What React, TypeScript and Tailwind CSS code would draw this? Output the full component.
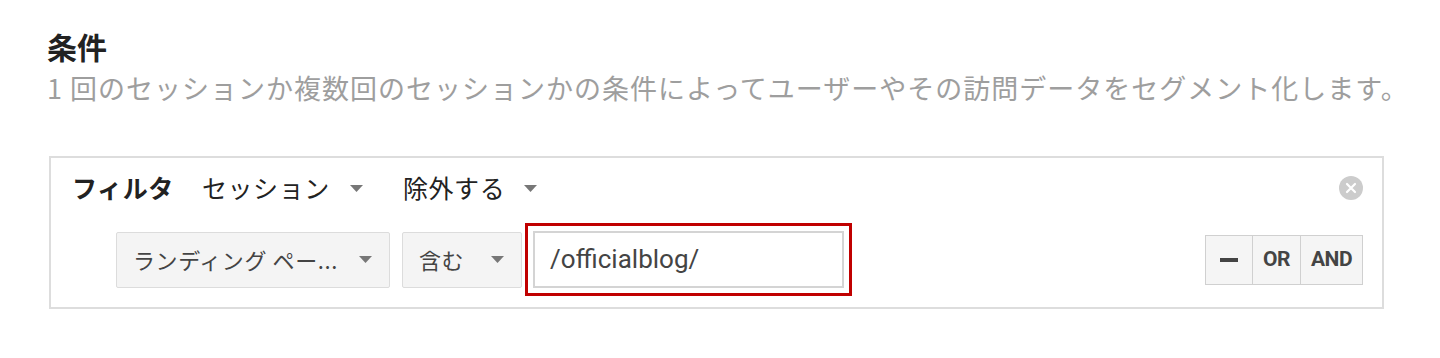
import React from 'react';

const jp = "font-['Noto_Sans_CJK_JP','Noto_Sans',sans-serif]";

function Caret({ className = '' }: { className?: string }) {
    return (
        <svg width="13" height="7" viewBox="0 0 13 7" className={className}>
            <path d="M0 0 L13 0 L6.5 7 Z" fill="#777777" />
        </svg>
    );
}

function SelectBox({ label, width }: { label: string; width: string }) {
    return (
        <div
            className={`flex items-center justify-between ${width} h-[56px] pl-[16px] pr-[17px] bg-[#f4f4f4] border border-[#dcdcdc] rounded-[2px] text-[22px] tracking-[0.6px] text-[#444444] ${jp}`}
        >
            <span className="whitespace-nowrap">{label}</span>
            <Caret />
        </div>
    );
}

export default function App() {
    return (
        <div className="w-[1440px] h-[358px] bg-white pl-[47px] pt-[27px] overflow-hidden">
            <h2 className={`text-[30px] leading-[38px] font-bold text-[#222222] ${jp}`}>条件</h2>
            <p className={`mt-[5px] text-[27px] leading-[36px] tracking-[1px] text-[#9e9e9e] whitespace-nowrap ${jp}`}>
                1 回のセッションか複数回のセッションかの条件によってユーザーやその訪問データをセグメント化します。
            </p>

            <div className="mt-[50px] ml-[2px] w-[1335px] border-2 border-[#dddddd] pt-[12px] pb-[11px] pl-[21px] pr-[19px]">
                <div className={`flex items-center h-[36px] text-[25px] tracking-[0.6px] text-[#222222] ${jp}`}>
                    <span className="font-bold">フィルタ</span>
                    <span className="ml-[28px]">セッション</span>
                    <Caret className="ml-[20px]" />
                    <span className="ml-[40px]">除外する</span>
                    <Caret className="ml-[19px]" />
                    <div className="ml-auto w-[24px] h-[24px] rounded-full bg-[#cccccc] flex items-center justify-center">
                        <svg width="12" height="12" viewBox="0 0 12 12">
                            <path d="M2 2 L10 10 M10 2 L2 10" stroke="#ffffff" strokeWidth="2.2" strokeLinecap="round" />
                        </svg>
                    </div>
                </div>

                <div className="flex items-center mt-[17px] pl-[44px]">
                    <SelectBox label="ランディング ペー..." width="w-[274px]" />
                    <div className="ml-[12px]">
                        <SelectBox label="含む" width="w-[120px]" />
                    </div>
                    <div className="ml-[3px] border-[3px] border-[#c00000] p-[5px]">
                        <div className="w-[311px] h-[57px] border-2 border-[#d4d4d4] bg-white flex items-center pl-[15px] font-['Roboto','Liberation_Sans',sans-serif] text-[26px] text-[#444444]">
                            /officialblog/
                        </div>
                    </div>
                    <div className="ml-auto flex h-[50px] border border-[#d0d0d0] bg-[#f5f5f5] font-['Roboto','Liberation_Sans',sans-serif] font-bold text-[21px] tracking-[-0.5px] text-[#444444]">
                        <div className="w-[47px] flex items-center justify-center border-r border-[#d0d0d0]">
                            <span className="block w-[18px] h-[4px] bg-[#444444]"></span>
                        </div>
                        <div className="w-[48px] flex items-center justify-center border-r border-[#d0d0d0]">OR</div>
                        <div className="w-[61px] flex items-center justify-center">AND</div>
                    </div>
                </div>
            </div>
        </div>
    );
}
